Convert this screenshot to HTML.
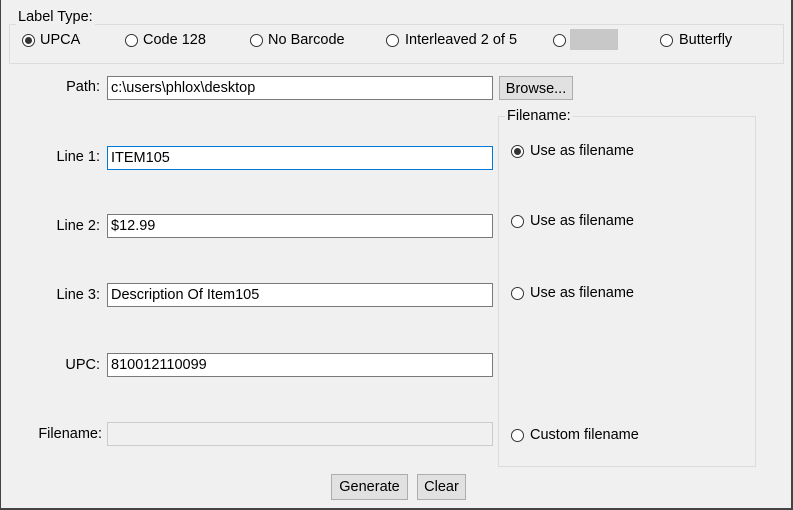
<!DOCTYPE html>
<html><head><style>
*{box-sizing:border-box}
body{margin:0;width:793px;height:510px;background:#f0f0f0;font-family:"Liberation Sans",sans-serif;font-size:14.5px;color:#000;position:relative;overflow:hidden}
.frame{position:absolute;left:0;top:0;width:793px;height:510px;border:1px solid #444;border-top:none;border-width:0 2px 2px 1px}
.a{position:absolute;white-space:nowrap}
.grp{position:absolute;border:1px solid #dcdcdc}
.lbl{position:absolute;background:#f0f0f0;padding:0 2px}
.r{position:absolute;width:13px;height:13px;border:1px solid #333;border-radius:50%;background:#fff}
.r.on::after{content:"";position:absolute;left:2px;top:2px;width:7px;height:7px;border-radius:50%;background:#333}
.tb{position:absolute;left:107px;width:386px;height:24px;border:1px solid #7a7a7a;background:#fff;padding:3px 3px;line-height:16px}
.rl{position:absolute;text-align:right;width:100px;left:0}
.btn{position:absolute;border:1px solid #adadad;background:#e1e1e1;text-align:center;line-height:24px}
</style></head><body>
<div class="grp" style="left:9px;top:24px;width:775px;height:40px"></div>
<div class="lbl a" style="left:16px;top:9px">Label Type:</div>
<div class="r on" style="left:22px;top:34px"></div><div class="a" style="left:40px;top:32px">UPCA</div>
<div class="r" style="left:125px;top:34px"></div><div class="a" style="left:143px;top:32px">Code 128</div>
<div class="r" style="left:250px;top:34px"></div><div class="a" style="left:268px;top:32px">No Barcode</div>
<div class="r" style="left:386px;top:34px"></div><div class="a" style="left:405px;top:32px">Interleaved 2 of 5</div>
<div class="r" style="left:553px;top:34px"></div><div class="a" style="left:570px;top:29px;width:48px;height:21px;background:#c8c8c8"></div>
<div class="r" style="left:660px;top:34px"></div><div class="a" style="left:679px;top:32px">Butterfly</div>

<div class="rl a" style="top:79px">Path:</div>
<div class="tb" style="top:76px">c:\users\phlox\desktop</div>
<div class="btn" style="left:499px;top:76px;width:74px;height:24px">Browse...</div>

<div class="grp" style="left:498px;top:116px;width:258px;height:351px"></div>
<div class="lbl a" style="left:505px;top:108px">Filename:</div>

<div class="rl a" style="top:149px">Line 1:</div>
<div class="tb" style="top:146px;border-color:#0078d7">ITEM105</div>
<div class="rl a" style="top:218px">Line 2:</div>
<div class="tb" style="top:214px">$12.99</div>
<div class="rl a" style="top:287px">Line 3:</div>
<div class="tb" style="top:283px">Description Of Item105</div>
<div class="rl a" style="top:357px">UPC:</div>
<div class="tb" style="top:353px">810012110099</div>
<div class="rl a" style="top:426px;width:102px">Filename:</div>
<div class="tb" style="top:422px;background:#f0f0f0;border-color:#ccc"></div>

<div class="r on" style="left:511px;top:145px"></div><div class="a" style="left:530px;top:143px">Use as filename</div>
<div class="r" style="left:511px;top:215px"></div><div class="a" style="left:530px;top:213px">Use as filename</div>
<div class="r" style="left:511px;top:287px"></div><div class="a" style="left:530px;top:285px">Use as filename</div>
<div class="r" style="left:511px;top:429px"></div><div class="a" style="left:530px;top:427px">Custom filename</div>

<div class="btn" style="left:331px;top:474px;width:77px;height:26px">Generate</div>
<div class="btn" style="left:417px;top:474px;width:49px;height:26px">Clear</div>
<div class="frame"></div>
</body></html>
